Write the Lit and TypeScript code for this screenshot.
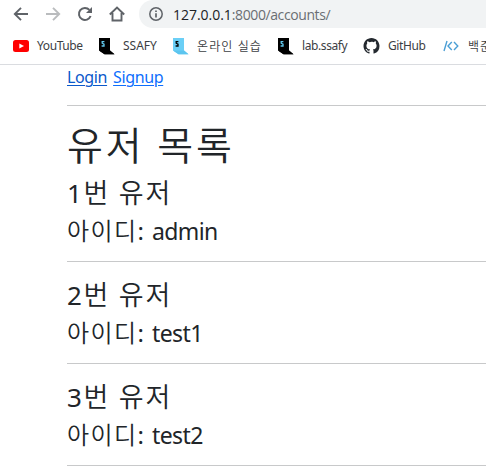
import { LitElement, html, svg, css } from "lit";
import { customElement } from "lit/decorators.js";

const cube = (face: string, shade: string, letter: string) => html`
  <svg class="icon" width="17" height="17" viewBox="0 0 17 17">
    <path d="M1 0H12V12.5L16.5 16.2H6.5L1 12.5Z" fill=${face} />
    <path d="M1 12.5H12L16.5 16.2H6.5Z" fill=${shade} />
    <path d="M6.4 3.6H4.2V5.2L6 6.2V8H3.6" fill="none" stroke=${letter} stroke-width="1.3" />
  </svg>`;

const info = svg`<g fill="none" stroke="#5f6368" stroke-width="1.5"><circle cx="8" cy="8" r="6.2"/><path d="M8 7.2V11.4M8 4.5V6" stroke-width="1.7"/></g>`;

@customElement("app-root")
export class AppRoot extends LitElement {
  static styles = css`
    :host { display: block; height: 471px; overflow: hidden; background: #fff; color: #212529;
      font-family: "Noto Sans", "Noto Sans CJK KR", sans-serif; }
    .toolbar { display: flex; align-items: center; height: 28px; }
    .nav { display: flex; gap: 16px; padding-left: 13px; width: 126px; box-sizing: border-box; flex: none; }
    .nav svg { flex: none; }
    svg { display: block; }
    .address { display: flex; align-items: center; flex: 1; height: 28px; margin-left: 13px; padding-left: 9px;
      background: #f1f3f4; border-radius: 14px 0 0 14px; box-sizing: border-box; font-size: 14px; white-space: nowrap; color: #6a6e73; }
    .url { margin-left: 9px; font-family: "Open Sans", sans-serif; letter-spacing: -0.4px; }
    .host { color: #202124; letter-spacing: -0.03px; }
    .bookmarks { display: flex; height: 36px; align-items: center; border-bottom: 1px solid #dadce0;
      font-size: 12px; color: #3c4043; white-space: nowrap; }
    .mark { display: flex; align-items: center; flex: none; letter-spacing: -0.4px; }
    .mark span { padding-bottom: 1px; }
    .mark .icon { flex: none; width: 17px; margin-right: 8px; }
    .m1 { width: 85px; padding-left: 13px; }
    .m1 .icon { margin-right: 7px; }
    .m2 { width: 74px; letter-spacing: 0; }
    .m3 { width: 105px; letter-spacing: 1.1px; font-weight: 350; }
    .m4 { width: 86px; }
    .m5 { width: 80px; }
    .m6 { letter-spacing: 1px; font-weight: 350; }
    main { margin-left: 67px; }
    .links { font-size: 16px; line-height: 24px; height: 40px; display: flex; gap: 6px; letter-spacing: -0.37px; }
    a { color: #0d6efd; text-decoration: underline; text-underline-offset: 2px; text-decoration-thickness: 1px; }
    .hover { color: #0a58ca; }
    hr { margin: 0; border: 0; height: 1px; background: #c8c9ca; }
    h1, h3, h4 { margin: 0; font-weight: 350; white-space: nowrap; }
    h1 { font-size: 39px; line-height: 48px; padding-top: 15px; letter-spacing: 2.8px; }
    h3 { font-size: 27px; line-height: 34px; padding-top: 16px; letter-spacing: 1.7px; }
    h1 + section h3 { padding-top: 7px; }
    h4 { font-size: 24px; line-height: 29px; margin-top: 6px; margin-bottom: 16px; letter-spacing: 1.4px; }
    .number { font-weight: 400; font-size: 26px; line-height: 1; }
    .colon { font-weight: 400; }
    .name { letter-spacing: -0.6px; font-weight: 400; font-size: 23px; line-height: 1; margin-left: -1px; }
  `;

  private users = ["admin", "test1", "test2"];

  render() {
    return html`
      <div class="toolbar">
        <div class="nav">
          <svg width="16" height="16" viewBox="0 0 16 16" fill="none" stroke="#5f6368" stroke-width="1.9"><path d="M15 8H2.5M8 1.8L1.8 8L8 14.2"/></svg>
          <svg width="16" height="16" viewBox="0 0 16 16" fill="none" stroke="#babcbe" stroke-width="1.9"><path d="M1 8H13.5M8 1.8L14.2 8L8 14.2"/></svg>
          <svg width="16" height="16" viewBox="0 0 16 16"><path d="M13.6 10A6 6 0 1 1 12.4 3.9" fill="none" stroke="#5f6368" stroke-width="2"/><path d="M15 1V7H9Z" fill="#5f6368"/></svg>
          <svg width="16" height="16" viewBox="0 0 16 16" fill="none" stroke="#5f6368" stroke-width="1.9"><path d="M.8 8.5L8 1.5L15.2 8.5M3.5 7V14.5H12.5V7"/></svg>
        </div>
        <div class="address">
          <svg width="16" height="16" viewBox="0 0 16 16">${info}</svg>
          <span class="url"><span class="host">127.0.0.1</span>:8000/accounts/</span>
        </div>
      </div>
      <div class="bookmarks">
        <div class="mark m1">
          <svg class="icon" width="17" height="12" viewBox="0 0 17 12"><rect width="16" height="12" rx="2.5" fill="#f00"/><path d="M6.3 3.4L11 6L6.3 8.6Z" fill="#fff"/></svg>
          <span>YouTube</span>
        </div>
        <div class="mark m2">${cube("#000", "#000", "#62c9ee")}<span>SSAFY</span></div>
        <div class="mark m3">${cube("#6bcff6", "#5cc5ef", "#000")}<span>온라인 실습</span></div>
        <div class="mark m4">${cube("#000", "#000", "#62c9ee")}<span>lab.ssafy</span></div>
        <div class="mark m5">
          <svg class="icon" width="17" height="16" viewBox="0 0 16 16"><path fill="#24292f" d="M8 0C3.58 0 0 3.58 0 8c0 3.54 2.29 6.53 5.47 7.59.4.07.55-.17.55-.38 0-.19-.01-.82-.01-1.49-2.01.37-2.53-.49-2.69-.94-.09-.23-.48-.94-.82-1.13-.28-.15-.68-.52-.01-.53.63-.01 1.08.58 1.23.82.72 1.21 1.87.87 2.33.66.07-.52.28-.87.51-1.07-1.78-.2-3.64-.89-3.64-3.95 0-.87.31-1.59.82-2.15-.08-.2-.36-1.02.08-2.12 0 0 .67-.21 2.2.82A7.6 7.6 0 0 1 8 3.86c.68 0 1.36.09 2 .27 1.53-1.04 2.2-.82 2.2-.82.44 1.1.16 1.92.08 2.12.51.56.82 1.27.82 2.15 0 3.07-1.87 3.75-3.65 3.95.29.25.54.73.54 1.48 0 1.07-.01 1.93-.01 2.2 0 .21.15.46.55.38A8 8 0 0 0 16 8c0-4.42-3.58-8-8-8Z"/></svg>
          <span>GitHub</span>
        </div>
        <div class="mark m6">
          <svg class="icon" width="17" height="16" viewBox="0 0 17 16" fill="none" stroke="#4b9fd5" stroke-width="1.4"><path d="M4 3L1 13M8.8 4L5 8L8.8 12M11 4L14.8 8L11 12"/></svg>
          <span>백준</span>
        </div>
      </div>
      <main>
        <div class="links"><a class="hover">Login</a><a>Signup</a></div>
        <hr />
        <h1>유저 목록</h1>
        ${this.users.map((name, i) => html`<section>
          <h3><span class="number">${i + 1}</span>번 유저</h3>
          <h4>아이디<span class="colon">:</span> <span class="name">${name}</span></h4>
          <hr />
        </section>`)}
      </main>`;
  }
}
